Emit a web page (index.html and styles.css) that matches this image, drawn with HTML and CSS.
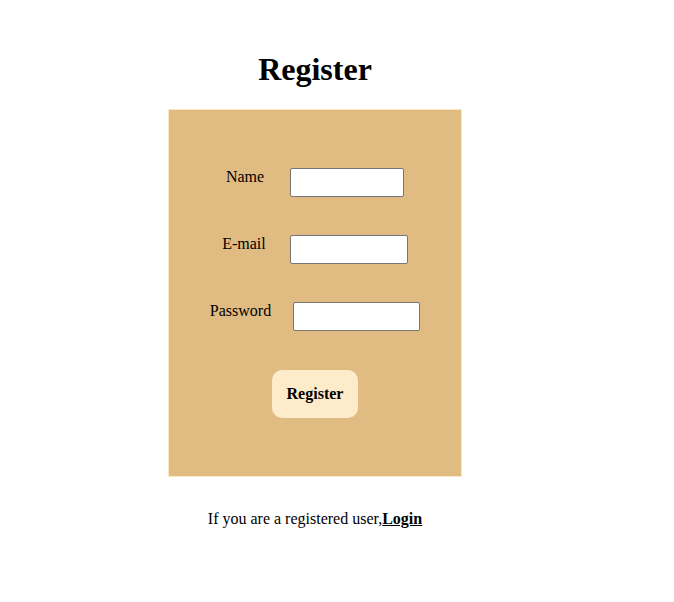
FILE: index.html
```html
<!DOCTYPE html>
<html>
<head>
<meta charset="utf-8">
<title>Register</title>
<link rel="stylesheet" href="styles.css">
</head>
<body>
<div class="page">
  <h1 class="title">Register</h1>
  <form class="card">
    <div class="row row--name">
      <label class="label" for="name">Name</label>
      <input class="field field--name" id="name" type="text">
    </div>
    <div class="row row--email">
      <label class="label" for="email">E-mail</label>
      <input class="field field--email" id="email" type="email">
    </div>
    <div class="row row--pass">
      <label class="label" for="pass">Password</label>
      <input class="field field--pass" id="pass" type="password">
    </div>
    <div class="actions">
      <button class="btn" type="button">Register</button>
    </div>
  </form>
  <p class="footer">If you are a registered user,<a class="link" href="#">Login</a></p>
</div>
</body>
</html>
```

FILE: styles.css
```css
html, body {
  margin: 0;
  padding: 0;
  background: #ffffff;
}
body {
  font-family: "Liberation Serif", "Times New Roman", serif;
  font-size: 16px;
  color: #000;
}
.page {
  width: 294px;
  margin-left: 168px;
  padding-top: 51px;
  text-align: center;
}
.title {
  margin: 0 0 21px;
  font-size: 32px;
  font-weight: bold;
  line-height: 37px;
}
.card {
  box-sizing: border-box;
  height: 368px;
  background: #e0bb82;
  border: 1px solid #fde8c6;
  padding-top: 58px;
  display: flex;
  flex-direction: column;
  align-items: center;
}
.row {
  display: flex;
  align-items: flex-start;
  justify-content: center;
  gap: 24px;
  margin-bottom: 38px;
}
.row--name { gap: 26px; }
.row--pass { gap: 22px; }
.label {
  line-height: 18px;
}
.field {
  box-sizing: border-box;
  height: 29px;
  margin: 0;
  background: #fff;
  border: 1px solid #767676;
  border-radius: 2px;
  padding: 2px 4px;
}
.field--name { width: 114px; }
.field--email { width: 118px; }
.field--pass { width: 127px; }
.actions {
  margin-top: 1px;
}
.btn {
  box-sizing: border-box;
  width: 86px;
  height: 48px;
  background: #feebc9;
  border: none;
  border-radius: 10px;
  font-family: "Liberation Serif", "Times New Roman", serif;
  font-size: 16px;
  font-weight: bold;
  color: #000;
  padding: 0;
}
.footer {
  margin: 33px 0 0;
  line-height: 18px;
}
.link {
  color: #000;
  font-weight: bold;
  text-decoration: underline;
}
```
